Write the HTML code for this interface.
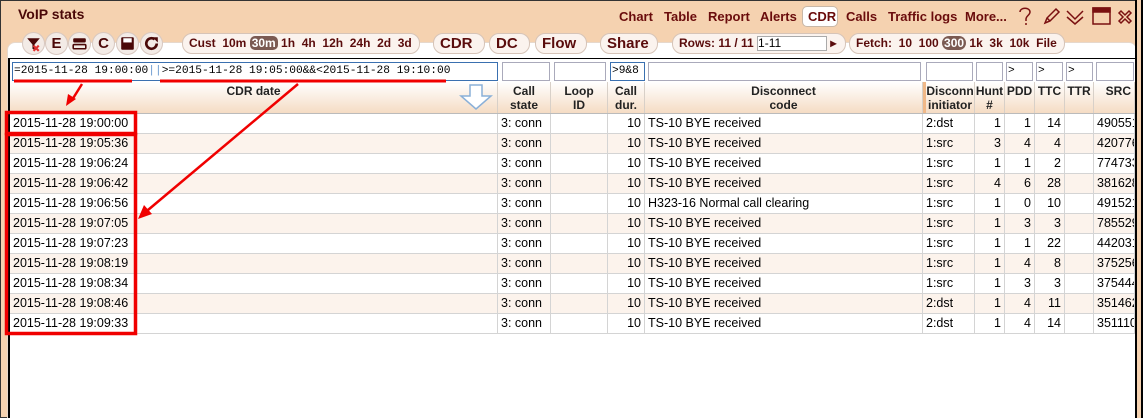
<!DOCTYPE html>
<html><head><meta charset="utf-8"><style>
*{box-sizing:border-box;margin:0;padding:0}
body{width:1143px;height:418px;overflow:hidden;background:#f5d2b0;font-family:"Liberation Sans",Arial,sans-serif;position:relative}
.abs{position:absolute}
.title{left:18px;top:6px;font-weight:bold;font-size:14px;color:#4a0808}
.menu{top:9px;font-size:13px;font-weight:bold;color:#6a0c0c;position:absolute}
.panel{left:7px;top:42px;width:1130px;height:376px;background:#fff;border-radius:8px 8px 0 0;border:1px solid #e6d8cc}
.btn{position:absolute;top:32px;width:23px;height:23px;border-radius:50%;background:#f3ebe6;border:1px solid #d8c8c0;font-weight:bold;color:#4a0808;font-size:15px;text-align:center;line-height:21px}
.pill{position:absolute;top:33px;height:21px;border-radius:10px;background:#fbf3ee;border:1px solid #d6c4b8;font-size:12px;font-weight:bold;color:#5a0c0c;line-height:19px;padding:0 6px;white-space:nowrap}
.sel{background:#7b5a52;color:#fff;border-radius:5px;padding:0 2px}
.bigp{font-size:15px}
.grid{left:8px;top:58px;width:1128px;height:360px;border-left:2px solid #000;border-top:1px solid #000;background:#fff}
.f{position:absolute;top:62px;height:19px;border:1px solid #aab;background:#fff;font-family:"Liberation Mono",monospace;font-size:11.2px;line-height:17px;padding-left:1px;color:#000;white-space:nowrap;overflow:hidden}
.h{position:absolute;top:82px;height:31px;background:linear-gradient(#fff,#f5dcc4);border-right:1px solid #d8d0c8;font-size:12px;font-weight:bold;color:#222;text-align:center;line-height:14px;padding-top:2px}
.row{position:absolute;left:10px;width:1125px;height:20px;border-bottom:1px solid #d4d4d4}
.c{position:absolute;top:0;height:20px;border-right:1px solid #d4d4d4;font-size:12.5px;line-height:19px;color:#000;padding:0 3px;white-space:nowrap;overflow:hidden}
.r{text-align:right}
</style></head><body>
<div class="abs" style="left:0;top:0;width:1143px;height:418px;border:1px solid #333;border-right:2px solid #000;border-radius:0 6px 0 0"></div>
<div class="abs title">VoIP stats</div>
<div class="menu" style="left:619px">Chart</div>
<div class="menu" style="left:664px">Table</div>
<div class="menu" style="left:708px">Report</div>
<div class="menu" style="left:760px">Alerts</div>
<div class="abs" style="left:802px;top:6px;width:36px;height:21px;border:1px solid #c8b8a8;border-radius:5px;background:#fff"></div>
<div class="menu" style="left:808px">CDR</div>
<div class="menu" style="left:846px">Calls</div>
<div class="menu" style="left:888px">Traffic logs</div>
<div class="menu" style="left:965px">More...</div>
<svg class="abs" style="left:1015px;top:5px" width="125" height="22" viewBox="0 0 125 22" fill="none" stroke="#7a1010" stroke-width="1.5">
<path d="M5 7c0-5 10-5 10 0 0 3-4 4-4 7v2M11 18v2"/>
<path d="M30 18l2-5 9-9 3 3-9 9z M32 13l3 3"/>
<path d="M52 6l8 8 8-8M52 12l8 7 8-7"/>
<rect x="78" y="3" width="17" height="16" /><rect x="78" y="3" width="17" height="4" fill="#7a1010"/>
<path d="M106 6l4 4 4-4 2 2-4 4 4 4-2 2-4-4-4 4-2-2 4-4-4-4z"/>
</svg>
<div class="abs panel"></div>
<div class="btn" style="left:22px"><svg width="21" height="21" viewBox="0 0 20 20"><path d="M4 5h12l-5 6v5l-2-1v-4z" fill="#4a0808"/><path d="M10 12l5 5M15 12l-5 5" stroke="#e03030" stroke-width="2"/></svg></div>
<div class="btn" style="left:45px">E</div>
<div class="btn" style="left:68px"><svg width="21" height="21" viewBox="0 0 20 20"><rect x="4" y="5" width="12" height="4" rx="1" fill="#4a0808"/><rect x="4" y="11" width="12" height="4" rx="1" fill="none" stroke="#4a0808" stroke-width="1.5"/></svg></div>
<div class="btn" style="left:92px">C</div>
<div class="btn" style="left:116px"><svg width="21" height="21" viewBox="0 0 20 20"><rect x="4" y="4" width="12" height="12" rx="1" fill="#4a0808"/><rect x="6" y="5" width="8" height="4" fill="#fff"/></svg></div>
<div class="btn" style="left:140px"><svg width="21" height="21" viewBox="0 0 20 20"><path d="M15 10a5 5 0 1 1-2-4" fill="none" stroke="#4a0808" stroke-width="2.5"/><path d="M11 4h5v5z" fill="#4a0808"/></svg></div>
<div class="pill" style="left:182px;width:238px">Cust &nbsp;10m <span class="sel">30m</span> 1h &nbsp;4h &nbsp;12h &nbsp;24h &nbsp;2d &nbsp;3d</div>
<div class="pill bigp" style="left:433px;width:52px">CDR</div>
<div class="pill bigp" style="left:489px;width:41px">DC</div>
<div class="pill bigp" style="left:535px;width:52px">Flow</div>
<div class="pill bigp" style="left:600px;width:58px">Share</div>
<div class="pill" style="left:672px;width:174px">Rows: 11 / 11 <span style="display:inline-block;width:70px;height:15px;background:#fff;border:1px solid #aaa;font-weight:normal;color:#000;line-height:13px;vertical-align:middle">1-11</span> ▸</div>
<div class="pill" style="left:849px;width:216px">Fetch: &nbsp;10 &nbsp;100 <span class="sel" style="border-radius:8px">300</span> 1k &nbsp;3k &nbsp;10k &nbsp;File</div>
<div class="abs grid"></div>
<div class="f" style="left:12px;width:486px;border-color:#3a70b0">=2015-11-28 19:00:00<span style="color:#6a9ad0">||</span>&gt;=2015-11-28 19:05:00&amp;&amp;&lt;2015-11-28 19:10:00</div>
<div class="f" style="left:502px;width:48px"></div>
<div class="f" style="left:554px;width:52px"></div>
<div class="f" style="left:610px;width:35px;border-color:#3a70b0">&gt;9&amp;8</div>
<div class="f" style="left:648px;width:273px"></div>
<div class="f" style="left:926px;width:47px"></div>
<div class="f" style="left:976px;width:27px"></div>
<div class="f" style="left:1006px;width:27px">&gt;</div>
<div class="f" style="left:1036px;width:27px">&gt;</div>
<div class="f" style="left:1066px;width:27px">&gt;</div>
<div class="f" style="left:1096px;width:38px"></div>
<div class="h" style="left:10px;width:488px;padding-top:2px">CDR date</div>
<div class="h" style="left:498px;width:53px">Call<br>state</div>
<div class="h" style="left:551px;width:57px">Loop<br>ID</div>
<div class="h" style="left:608px;width:37px">Call<br>dur.</div>
<div class="h" style="left:645px;width:278px">Disconnect<br>code</div>
<div class="h" style="left:923px;width:52px;border-left:3px solid #f0b888">Disconn<br>initiator</div>
<div class="h" style="left:975px;width:30px">Hunt<br>#</div>
<div class="h" style="left:1005px;width:30px">PDD</div>
<div class="h" style="left:1035px;width:30px">TTC</div>
<div class="h" style="left:1065px;width:29px">TTR</div>
<div class="h" style="left:1094px;width:41px;text-align:right;padding-right:3px">SRC</div>
<svg class="abs" style="left:458px;top:83px" width="38" height="28"><path d="M12 2h12v11h9L18 26 3 13h9z" fill="#fff" stroke="#8ab0d8" stroke-width="1.5"/></svg>
<div class="abs" style="left:8px;top:113px;width:1127px;height:1px;background:#bbb"></div>
<div class="row" style="top:114px;background:#fff"><div class="c" style="left:0;width:488px">2015-11-28 19:00:00</div><div class="c" style="left:488px;width:53px">3: conn</div><div class="c" style="left:541px;width:57px"></div><div class="c r" style="left:598px;width:37px">10</div><div class="c" style="left:635px;width:278px">TS-10 BYE received</div><div class="c" style="left:913px;width:52px">2:dst</div><div class="c r" style="left:965px;width:30px">1</div><div class="c r" style="left:995px;width:30px">1</div><div class="c r" style="left:1025px;width:30px">14</div><div class="c" style="left:1055px;width:29px"></div><div class="c" style="left:1084px;width:41px">490551</div></div>
<div class="row" style="top:134px;background:#fcf3ec"><div class="c" style="left:0;width:488px">2015-11-28 19:05:36</div><div class="c" style="left:488px;width:53px">3: conn</div><div class="c" style="left:541px;width:57px"></div><div class="c r" style="left:598px;width:37px">10</div><div class="c" style="left:635px;width:278px">TS-10 BYE received</div><div class="c" style="left:913px;width:52px">1:src</div><div class="c r" style="left:965px;width:30px">3</div><div class="c r" style="left:995px;width:30px">4</div><div class="c r" style="left:1025px;width:30px">4</div><div class="c" style="left:1055px;width:29px"></div><div class="c" style="left:1084px;width:41px">420776</div></div>
<div class="row" style="top:154px;background:#fff"><div class="c" style="left:0;width:488px">2015-11-28 19:06:24</div><div class="c" style="left:488px;width:53px">3: conn</div><div class="c" style="left:541px;width:57px"></div><div class="c r" style="left:598px;width:37px">10</div><div class="c" style="left:635px;width:278px">TS-10 BYE received</div><div class="c" style="left:913px;width:52px">1:src</div><div class="c r" style="left:965px;width:30px">1</div><div class="c r" style="left:995px;width:30px">1</div><div class="c r" style="left:1025px;width:30px">2</div><div class="c" style="left:1055px;width:29px"></div><div class="c" style="left:1084px;width:41px">774733</div></div>
<div class="row" style="top:174px;background:#fcf3ec"><div class="c" style="left:0;width:488px">2015-11-28 19:06:42</div><div class="c" style="left:488px;width:53px">3: conn</div><div class="c" style="left:541px;width:57px"></div><div class="c r" style="left:598px;width:37px">10</div><div class="c" style="left:635px;width:278px">TS-10 BYE received</div><div class="c" style="left:913px;width:52px">1:src</div><div class="c r" style="left:965px;width:30px">4</div><div class="c r" style="left:995px;width:30px">6</div><div class="c r" style="left:1025px;width:30px">28</div><div class="c" style="left:1055px;width:29px"></div><div class="c" style="left:1084px;width:41px">381628</div></div>
<div class="row" style="top:194px;background:#fff"><div class="c" style="left:0;width:488px">2015-11-28 19:06:56</div><div class="c" style="left:488px;width:53px">3: conn</div><div class="c" style="left:541px;width:57px"></div><div class="c r" style="left:598px;width:37px">10</div><div class="c" style="left:635px;width:278px">H323-16 Normal call clearing</div><div class="c" style="left:913px;width:52px">1:src</div><div class="c r" style="left:965px;width:30px">1</div><div class="c r" style="left:995px;width:30px">0</div><div class="c r" style="left:1025px;width:30px">10</div><div class="c" style="left:1055px;width:29px"></div><div class="c" style="left:1084px;width:41px">491521</div></div>
<div class="row" style="top:214px;background:#fcf3ec"><div class="c" style="left:0;width:488px">2015-11-28 19:07:05</div><div class="c" style="left:488px;width:53px">3: conn</div><div class="c" style="left:541px;width:57px"></div><div class="c r" style="left:598px;width:37px">10</div><div class="c" style="left:635px;width:278px">TS-10 BYE received</div><div class="c" style="left:913px;width:52px">1:src</div><div class="c r" style="left:965px;width:30px">1</div><div class="c r" style="left:995px;width:30px">3</div><div class="c r" style="left:1025px;width:30px">3</div><div class="c" style="left:1055px;width:29px"></div><div class="c" style="left:1084px;width:41px">785529</div></div>
<div class="row" style="top:234px;background:#fff"><div class="c" style="left:0;width:488px">2015-11-28 19:07:23</div><div class="c" style="left:488px;width:53px">3: conn</div><div class="c" style="left:541px;width:57px"></div><div class="c r" style="left:598px;width:37px">10</div><div class="c" style="left:635px;width:278px">TS-10 BYE received</div><div class="c" style="left:913px;width:52px">1:src</div><div class="c r" style="left:965px;width:30px">1</div><div class="c r" style="left:995px;width:30px">1</div><div class="c r" style="left:1025px;width:30px">22</div><div class="c" style="left:1055px;width:29px"></div><div class="c" style="left:1084px;width:41px">442031</div></div>
<div class="row" style="top:254px;background:#fcf3ec"><div class="c" style="left:0;width:488px">2015-11-28 19:08:19</div><div class="c" style="left:488px;width:53px">3: conn</div><div class="c" style="left:541px;width:57px"></div><div class="c r" style="left:598px;width:37px">10</div><div class="c" style="left:635px;width:278px">TS-10 BYE received</div><div class="c" style="left:913px;width:52px">1:src</div><div class="c r" style="left:965px;width:30px">1</div><div class="c r" style="left:995px;width:30px">4</div><div class="c r" style="left:1025px;width:30px">8</div><div class="c" style="left:1055px;width:29px"></div><div class="c" style="left:1084px;width:41px">375256</div></div>
<div class="row" style="top:274px;background:#fff"><div class="c" style="left:0;width:488px">2015-11-28 19:08:34</div><div class="c" style="left:488px;width:53px">3: conn</div><div class="c" style="left:541px;width:57px"></div><div class="c r" style="left:598px;width:37px">10</div><div class="c" style="left:635px;width:278px">TS-10 BYE received</div><div class="c" style="left:913px;width:52px">1:src</div><div class="c r" style="left:965px;width:30px">1</div><div class="c r" style="left:995px;width:30px">3</div><div class="c r" style="left:1025px;width:30px">3</div><div class="c" style="left:1055px;width:29px"></div><div class="c" style="left:1084px;width:41px">375444</div></div>
<div class="row" style="top:294px;background:#fcf3ec"><div class="c" style="left:0;width:488px">2015-11-28 19:08:46</div><div class="c" style="left:488px;width:53px">3: conn</div><div class="c" style="left:541px;width:57px"></div><div class="c r" style="left:598px;width:37px">10</div><div class="c" style="left:635px;width:278px">TS-10 BYE received</div><div class="c" style="left:913px;width:52px">2:dst</div><div class="c r" style="left:965px;width:30px">1</div><div class="c r" style="left:995px;width:30px">4</div><div class="c r" style="left:1025px;width:30px">11</div><div class="c" style="left:1055px;width:29px"></div><div class="c" style="left:1084px;width:41px">351462</div></div>
<div class="row" style="top:314px;background:#fff"><div class="c" style="left:0;width:488px">2015-11-28 19:09:33</div><div class="c" style="left:488px;width:53px">3: conn</div><div class="c" style="left:541px;width:57px"></div><div class="c r" style="left:598px;width:37px">10</div><div class="c" style="left:635px;width:278px">TS-10 BYE received</div><div class="c" style="left:913px;width:52px">2:dst</div><div class="c r" style="left:965px;width:30px">1</div><div class="c r" style="left:995px;width:30px">4</div><div class="c r" style="left:1025px;width:30px">14</div><div class="c" style="left:1055px;width:29px"></div><div class="c" style="left:1084px;width:41px">351110</div></div>
<div class="abs" style="left:1135px;top:0;width:8px;height:418px;background:#f5d2b0;border-left:2px solid #000;border-right:2px solid #000"></div>
<svg class="abs" style="left:0;top:0" width="1143" height="418" fill="none" stroke="#f00000">
<path d="M14 81H132" stroke-width="3"/><path d="M160 81H446" stroke-width="3"/>
<rect x="6.5" y="112.5" width="129" height="21" stroke-width="3.5"/>
<rect x="6.5" y="134.5" width="129" height="199" stroke-width="3.5"/>
<path d="M82 84L72 100" stroke-width="2.5"/><path d="M66 106l2-12 8 5z" fill="#f00000" stroke="none"/>
<path d="M298 84L148 210" stroke-width="2.5"/><path d="M138 219l6-14 8 9z" fill="#f00000" stroke="none"/>
</svg>
</body></html>
